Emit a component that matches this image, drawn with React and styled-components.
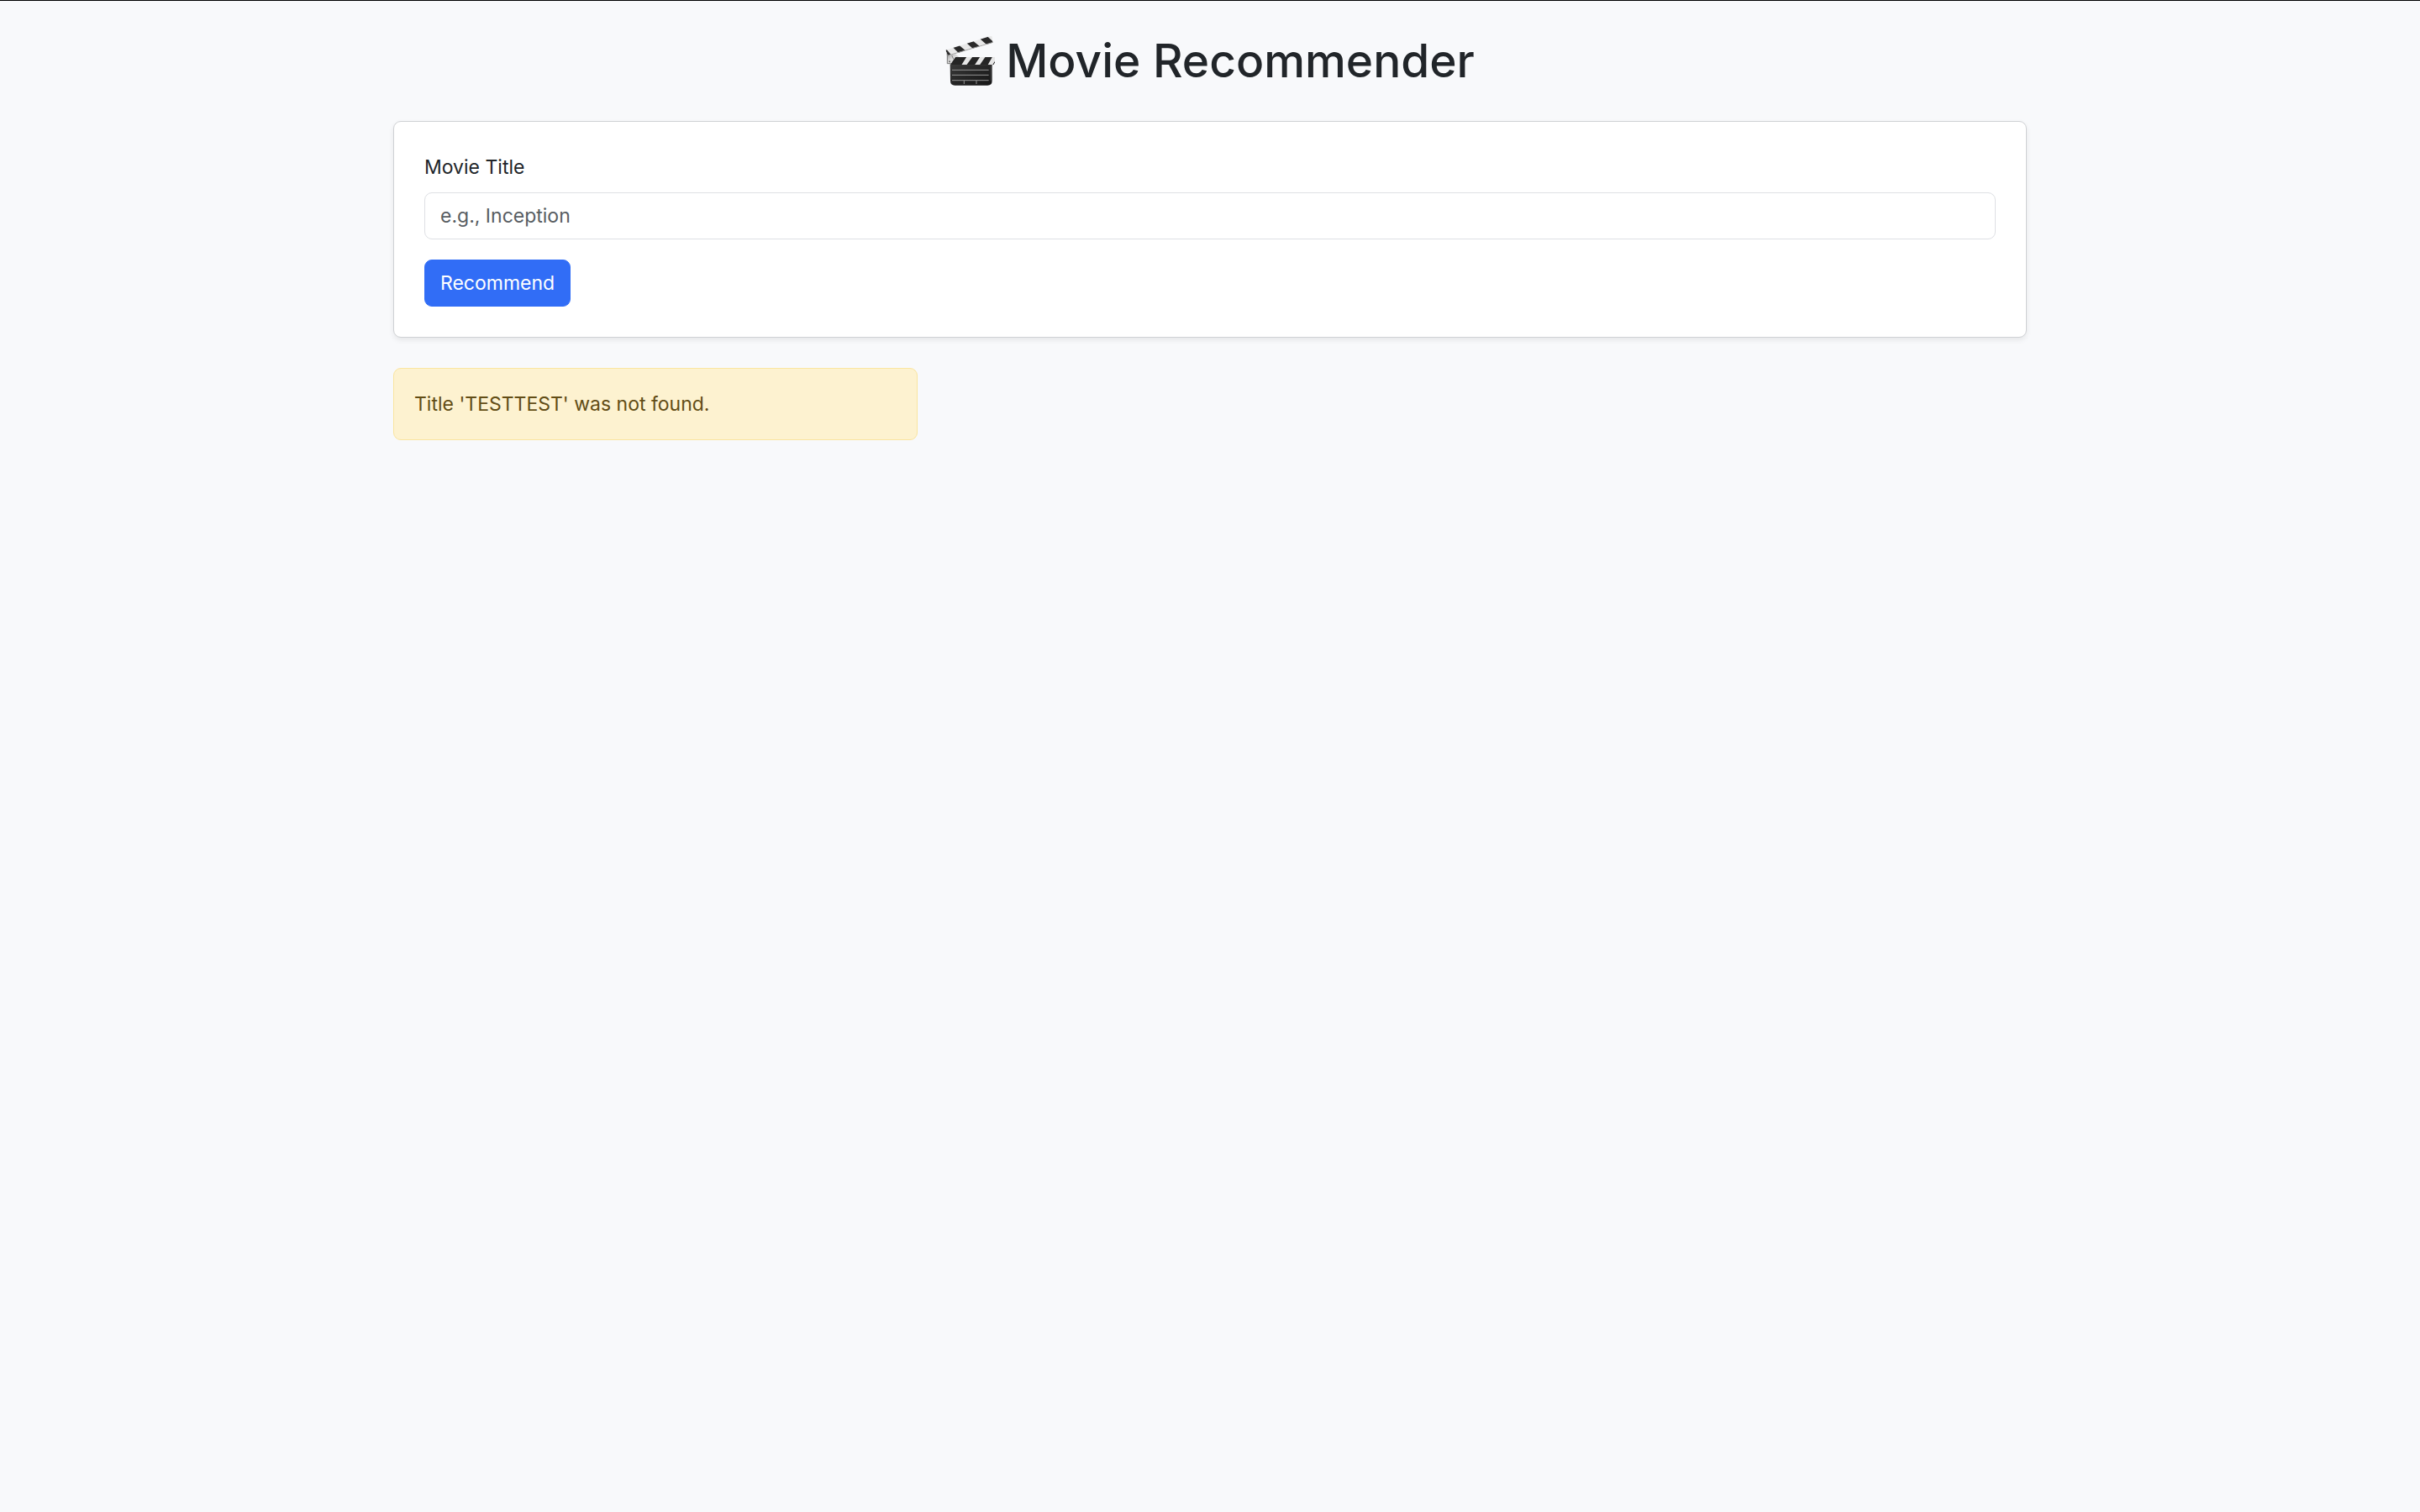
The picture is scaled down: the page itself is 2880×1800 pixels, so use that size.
import React, { useState } from "react";
import styled, { createGlobalStyle } from "styled-components";

const GlobalStyle = createGlobalStyle`
  *, *::before, *::after { box-sizing: border-box; }
  body {
    margin: 0;
    min-height: 100vh;
    border-top: 1px solid #000;
    background: #f8f9fb;
    color: #212529;
    font-family: Inter, "Liberation Sans", sans-serif;
    font-size: 23px;
    line-height: 36px;
  }
`;

const Container = styled.main`
  max-width: 1980px;
  margin: 0 auto;
  padding: 35px 18px;
`;

const Title = styled.h1`
  display: flex;
  justify-content: center;
  align-items: center;
  gap: 12px;
  margin: 0 0 36px;
  font-size: 55px;
  font-weight: 500;
  line-height: 72px;
`;

const Clapper = styled.svg`
  width: 60px;
  height: 60px;
  flex: none;
`;

const Card = styled.form`
  padding: 36px;
  border: 1px solid #cfd1d4;
  border-radius: 9px;
  background: #fff;
  box-shadow: 0 3px 6px rgba(0, 0, 0, 0.075);
`;

const Field = styled.div`
  display: flex;
  flex-direction: column;
  gap: 12px;
  margin-bottom: 24px;
`;

const TextInput = styled.input`
  width: 100%;
  height: 56px;
  padding: 9px 18px;
  border: 1px solid #dee0e4;
  border-radius: 9px;
  background: #fff;
  color: inherit;
  font: inherit;

  &::placeholder {
    color: #585d62;
    opacity: 1;
  }
`;

const SubmitButton = styled.button`
  display: block;
  height: 56px;
  padding: 9px 18px;
  border: 1px solid #316df6;
  border-radius: 9px;
  background: #316df6;
  color: #fff;
  font: inherit;
`;

const Results = styled.section`
  display: grid;
  grid-template-columns: repeat(3, 1fr);
  gap: 36px;
  margin-top: 36px;
`;

const Alert = styled.div`
  padding: 24px;
  border: 1px solid #fae59f;
  border-radius: 9px;
  background: #fdf2d0;
  color: #624d16;
`;

function ClapperIcon() {
  return (
    <Clapper viewBox="45 33 180 180" aria-hidden="true">
      <defs>
        <linearGradient id="slate" x1="0" y1="0" x2="1" y2="1">
          <stop offset="0" stopColor="#3a3a3a" />
          <stop offset="0.5" stopColor="#252525" />
          <stop offset="1" stopColor="#161616" />
        </linearGradient>
        <linearGradient id="hinge" x1="0" y1="0" x2="1" y2="1">
          <stop offset="0" stopColor="#888" />
          <stop offset="0.5" stopColor="#dedede" />
          <stop offset="1" stopColor="#aaa" />
        </linearGradient>
        <clipPath id="arm">
          <path d="M46 86 L208 35 L212 38 L215 60 L55 107 Z" />
        </clipPath>
        <clipPath id="bar">
          <path d="M63 138 L78 111 H222 V130 L217 139 Z" />
        </clipPath>
      </defs>
      <path d="M50 96 L64 91 Q88 99 101 122 L92 135 H53 Z" fill="url(#hinge)" />
      <path d="M66 94 Q70 121 89 132" fill="none" stroke="#777" strokeWidth="3" />
      <path d="M52 97 V134 H78" fill="none" stroke="#777" strokeWidth="3" />
      <circle cx="61" cy="97" r="4" fill="#555" />
      <circle cx="60" cy="127" r="3" fill="#666" />
      <g clipPath="url(#arm)">
        <path d="M40 28 H224 V112 H40 Z" fill="#e8e8e8" />
        <path
          d="M72 76 L95 69 L116 87 L92 96 Z M121 61 L145 54 L168 73 L143 80 Z M169 46 L195 37 L218 58 L192 66 Z M45 84 L50 84 L65 102 L54 108 Z"
          fill="#292929"
        />
        <path d="M52 106 L216 58" stroke="#a5a5a5" strokeWidth="3" />
      </g>
      <path d="M62 136 H212 V196 Q212 212 196 212 H79 Q63 212 63 196 Z" fill="url(#slate)" />
      <g clipPath="url(#bar)">
        <path d="M60 108 H224 V142 H60 Z" fill="#e6e6e6" />
        <path
          d="M82 110 H121 L102 140 H61 Z M142 110 H169 L149 140 H120 Z M188 110 H213 L196 140 H167 Z M222 126 L212 140 H224 Z"
          fill="#252525"
        />
      </g>
      <path d="M69 157 H200 M69 175 H200 M69 194 H200 M112 195 V207 M156 195 V207" stroke="#929292" strokeWidth="3" />
      <path d="M208 142 V196" stroke="#555" strokeWidth="2" />
    </Clapper>
  );
}

export default function App() {
  const [title, setTitle] = useState("");

  return (
    <>
      <GlobalStyle />
      <Container>
        <Title>
          <ClapperIcon />
          Movie Recommender
        </Title>
        <Card onSubmit={(event) => event.preventDefault()}>
          <Field>
            <label htmlFor="movie-title">Movie Title</label>
            <TextInput
              id="movie-title"
              type="text"
              placeholder="e.g., Inception"
              value={title}
              onChange={(event) => setTitle(event.target.value)}
            />
          </Field>
          <SubmitButton type="submit">Recommend</SubmitButton>
        </Card>
        <Results>
          <Alert role="alert">Title 'TESTTEST' was not found.</Alert>
        </Results>
      </Container>
    </>
  );
}
